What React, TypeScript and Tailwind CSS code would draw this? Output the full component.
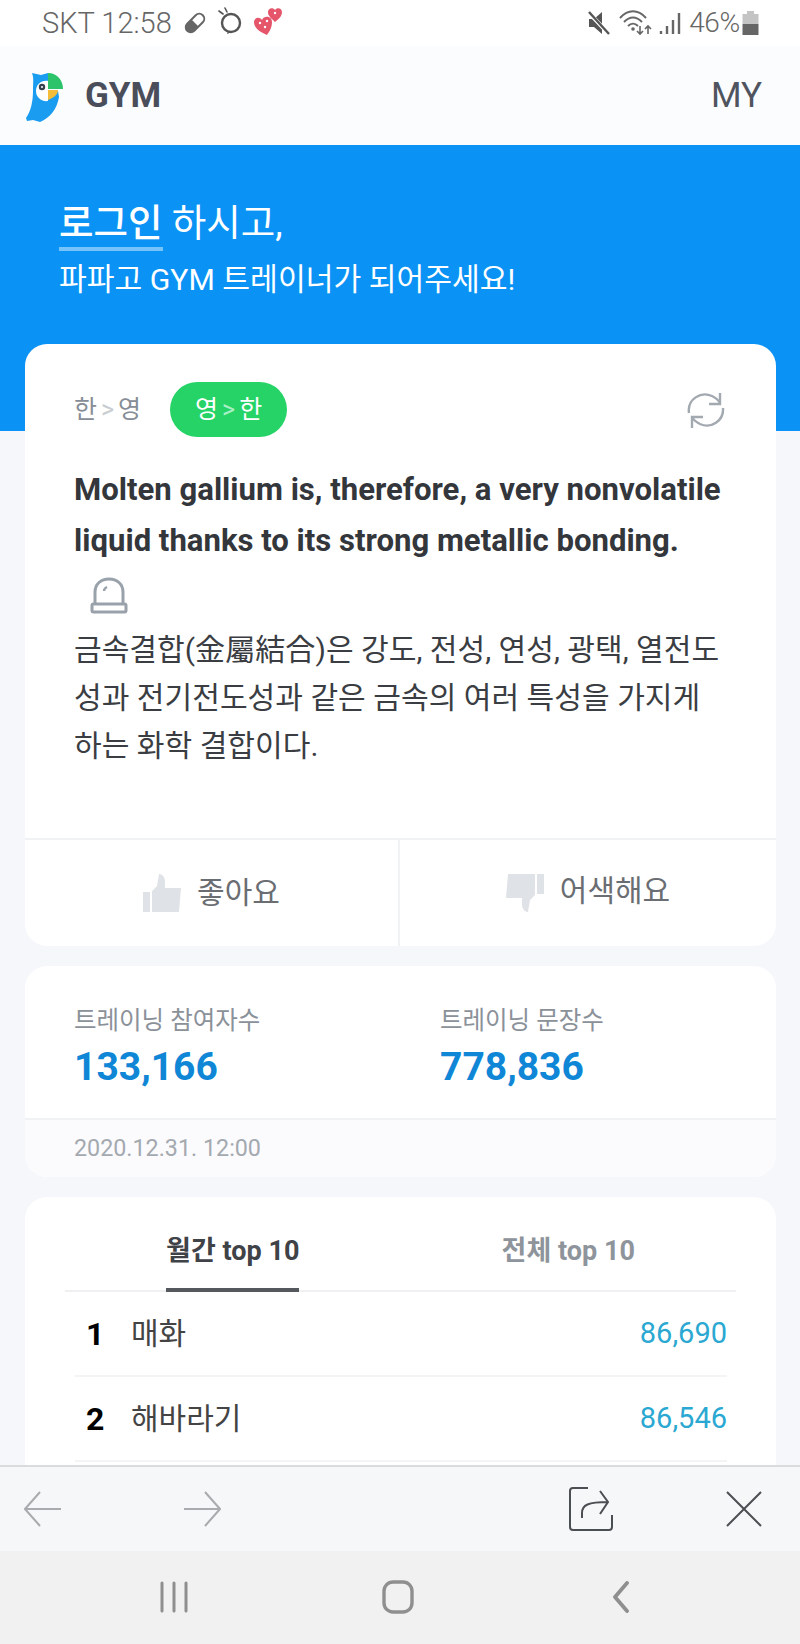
const FONT = "font-['Roboto','Noto_Sans_CJK_KR',sans-serif]";

function Logo() {
  return (
    <svg width="40" height="52" viewBox="0 0 40 52" className="shrink-0">
      <path d="M7 2 L16 4 L23 2 V20 H33 L34 26 C32 38 25 47 15 51 L8 49 L2 50 L1 47 C6 40 8 30 8 20 C8 12 9 7 7 2Z" fill="#1a9cf0" />
      <path d="M23 2 C32 2 38 9 38 18 H23Z" fill="#2cc36b" />
      <path d="M23 19 H33 C33 24 28 27 23 29Z" fill="#f3bd3a" />
      <path d="M23 10 C16 9 11 14 11 20 C11 26 16 31 23 30Z" fill="#ffffff" />
      <circle cx="17" cy="16" r="3.2" fill="#33404d" />
      <circle cx="17" cy="16" r="1" fill="#ffffff" />
    </svg>
  );
}

function StatusLeftIcons() {
  return (
    <div className="flex items-center gap-[10px]">
      <svg width="24" height="24" viewBox="0 0 24 24">
        <g transform="rotate(-45 12 12)">
          <rect x="1" y="7" width="22" height="10" rx="5" fill="none" stroke="#666" strokeWidth="2" />
          <path d="M6 7 H12 V17 H6 A5 5 0 0 1 6 7Z" fill="#666" />
        </g>
      </svg>
      <svg width="26" height="28" viewBox="0 0 26 28" className="-mt-1">
        <circle cx="14" cy="16" r="9" fill="none" stroke="#555" strokeWidth="2.4" />
        <path d="M11 24 L10 27 L15 25" fill="#555" />
        <path d="M2 4 L6 7 M8 1 L10 5" stroke="#555" strokeWidth="1.6" strokeLinecap="round" />
      </svg>
      <svg width="30" height="30" viewBox="0 0 30 30" className="-mt-1">
        <path d="M14 29 C7 26 1 22 1 16 C1 12 6 10 9 14 C11 9 19 10 19 16 C19 22 16 26 14 29Z" fill="#e5566b" />
        <path d="M22 16 C18 12 15 10 15 6 C15 2 20 1 22 4 C24 1 29 2 29 6 C29 10 26 13 22 16Z" fill="#e5566b" />
        <circle cx="7" cy="17" r="1.2" fill="#fff" />
        <circle cx="12" cy="21" r="1.2" fill="#fff" />
        <circle cx="14" cy="15" r="1.2" fill="#fff" />
        <circle cx="22" cy="7" r="1.2" fill="#fff" />
      </svg>
    </div>
  );
}

function StatusRightIcons() {
  return (
    <div className="flex items-center">
      <svg width="24" height="26" viewBox="0 0 24 26" className="mr-[8px]">
        <path d="M2 9 H7 L15 2 V24 L7 17 H2Z" fill="#555" />
        <path d="M1 2 L22 24" stroke="#fff" strokeWidth="4" />
        <path d="M2 2 L22 24" stroke="#555" strokeWidth="2.4" />
      </svg>
      <svg width="34" height="26" viewBox="0 0 34 26" className="mr-[6px]">
        <path d="M1 8 C9 -1 19 -1 27 8 M5 12 C11 6 17 6 23 12 M9 16 C12 13 16 13 19 16" fill="none" stroke="#666" strokeWidth="2" />
        <circle cx="14" cy="19" r="1.8" fill="#666" />
        <path d="M21 16 V24 M18 21 L21 24 L24 21 M29 24 V16 M26 19 L29 16 L32 19" fill="none" stroke="#666" strokeWidth="1.6" />
      </svg>
      <svg width="22" height="24" viewBox="0 0 22 24" className="mr-[8px]">
        <path d="M2 20 V23 M8 15 V23 M14 9 V23 M20 2 V23" stroke="#666" strokeWidth="2.4" />
      </svg>
      <span className="text-[28px] font-light leading-none text-[#666] tracking-[-0.3px]">46%</span>
      <svg width="17" height="24" viewBox="0 0 17 24" className="ml-[2px]">
        <rect x="5" y="0" width="7" height="3" fill="#c4c4c4" />
        <rect x="0.5" y="3" width="16" height="10" fill="#c4c4c4" />
        <rect x="0.5" y="13" width="16" height="11" fill="#666" />
      </svg>
    </div>
  );
}

function RefreshIcon() {
  return (
    <svg width="38" height="38" viewBox="0 0 38 38" fill="none" stroke="#a3a9b1" strokeWidth="2.4">
      <path d="M2 22 C0 8 14 0 25 5 C29 7 32 10 33 12" />
      <path d="M33 2 V13 H22" />
      <path d="M36 17 C37 30 24 38 13 33 C9 31 6 28 5 26" />
      <path d="M5 37 V26 H16" />
    </svg>
  );
}

function AlarmIcon() {
  return (
    <svg width="38" height="38" viewBox="0 0 38 38" fill="none" stroke="#99a1aa" strokeWidth="3">
      <path d="M5 26 V15 C5 7 11 2 19 2 C27 2 33 7 33 15 V26" />
      <rect x="2" y="27" width="34" height="8" rx="1.5" />
      <path d="M14 14 C14 12 15 11 17 10" strokeWidth="2.4" />
    </svg>
  );
}

function ThumbIcon({ down }: { down?: boolean }) {
  return (
    <svg width="38" height="38" viewBox="0 0 38 38" fill="#dfe2e6" className={down ? "rotate-180" : ""}>
      <rect x="0" y="18" width="7" height="20" />
      <path d="M9 17 L14 12 L16 0 C20 0 22 4 22 8 L22 14 L38 14 L36 38 L9 38Z" />
    </svg>
  );
}

function Row({ rank, name, count }: { rank: number; name: string; count: string }) {
  return (
    <div className="flex items-center h-[85px] border-b-2 border-[#f3f4f6] pl-[11px] shrink-0">
      <span className="w-[33px] text-[32px] font-bold text-black">{rank}</span>
      <span className="ml-[12px] text-[30px] text-[#444]">{name}</span>
      <span className="ml-auto text-[29px] text-[#2aa8d2]">{count}</span>
    </div>
  );
}

export default function App() {
  return (
    <div className={`${FONT} w-[800px] h-[1644px] flex flex-col overflow-hidden bg-[#f6f7fb]`}>
      {/* Status bar */}
      <div className="h-[46px] shrink-0 bg-white flex items-center justify-between pl-[42px] pr-[41px]">
        <div className="flex items-center gap-[11px]">
          <span className="text-[29px] leading-none text-[#666] font-light">SKT 12:58</span>
          <StatusLeftIcons />
        </div>
        <StatusRightIcons />
      </div>

      <div className="flex-1 min-h-0 overflow-hidden">
        {/* Header */}
        <div className="h-[99px] pt-[2px] bg-[#fbfcfe] flex items-center justify-between pl-[25px] pr-[38px]">
          <div className="flex items-center gap-[20px]">
            <Logo />
            <span className="text-[35px] font-bold text-[#4a4e5a]">GYM</span>
          </div>
          <span className="text-[35px] text-[#50545e]">MY</span>
        </div>

        {/* Login banner */}
        <div className="h-[286px] bg-[#0a93f5] pt-[55px] pl-[59px] text-white">
          <div className="text-[37.5px] leading-[46px]">
            <span className="inline-block font-medium border-b-[4px] border-[#76c3fb] pb-[1px]">로그인</span>{" "}
            <span>하시고,</span>
          </div>
          <div className="mt-[7px] text-[30.2px] leading-[44px]">파파고 GYM 트레이너가 되어주세요!</div>
        </div>

        <div className="-mt-[87px] pl-[25px] pr-[24px] flex flex-col gap-[20px]">
          {/* Training card */}
          <div className="bg-white rounded-[22px] h-[602px] flex flex-col overflow-hidden">
            <div className="flex-1 min-h-0 pt-[38px] px-[49px]">
              <div className="flex items-center h-[55px]">
                <span className="text-[25px] text-[#868d96]">
                  한<span className="text-[#c9cdd2] mx-[4px]">&gt;</span>영
                </span>
                <span className="ml-[29px] w-[117px] h-[55px] rounded-full bg-[#25d366] flex items-center justify-center text-[25px] text-white">
                  영<span className="text-[#a8efc4] mx-[4px]">&gt;</span>한
                </span>
                <div className="ml-auto mr-[2px]">
                  <RefreshIcon />
                </div>
              </div>
              <div className="mt-[27px] text-[31.1px] leading-[51px] font-bold text-[#33363b] whitespace-nowrap">
                Molten gallium is, therefore, a very nonvolatile
                <br />
                liquid thanks to its strong metallic bonding.
              </div>
              <div className="mt-[11px] ml-[16px] h-[38px]">
                <AlarmIcon />
              </div>
              <div className="mt-[11px] text-[30.1px] leading-[48px] text-[#3a3d42] whitespace-nowrap">
                금속결합(金屬結合)은 강도, 전성, 연성, 광택, 열전도
                <br />
                성과 전기전도성과 같은 금속의 여러 특성을 가지게
                <br />
                하는 화학 결합이다.
              </div>
            </div>
            <div className="h-[108px] shrink-0 flex border-t-2 border-[#f1f2f4]">
              <div className="w-[375px] flex items-center justify-center gap-[16px] border-r-2 border-[#f1f2f4] text-[30px] text-[#6a6d72]">
                <ThumbIcon />
                <span className="-mt-[2px]">좋아요</span>
              </div>
              <div className="flex-1 flex items-center justify-center gap-[16px] text-[30px] text-[#6a6d72]">
                <ThumbIcon down />
                <span className="-mt-[6px]">어색해요</span>
              </div>
            </div>
          </div>

          {/* Stats card */}
          <div className="bg-white rounded-[22px] h-[211px] flex flex-col overflow-hidden">
            <div className="h-[154px] shrink-0 flex pt-[38px] pl-[49px] border-b-2 border-[#f1f2f4]">
              <div className="w-[366px]">
                <div className="text-[24.5px] leading-[34px] text-[#8b9199]">트레이닝 참여자수</div>
                <div className="mt-[4px] text-[39px] leading-[50px] font-bold text-[#0f87d6]">133,166</div>
              </div>
              <div>
                <div className="text-[24.5px] leading-[34px] text-[#8b9199]">트레이닝 문장수</div>
                <div className="mt-[4px] text-[39px] leading-[50px] font-bold text-[#0f87d6]">778,836</div>
              </div>
            </div>
            <div className="flex-1 bg-[#fbfbfd] flex items-center pl-[49px] text-[23.3px] text-[#a4a9b0]">
              2020.12.31. 12:00
            </div>
          </div>

          {/* Top 10 card */}
          <div className="bg-white rounded-t-[22px] h-[400px] px-[40px] flex flex-col">
            <div className="h-[95px] shrink-0 grid grid-cols-2 border-b-2 border-[#eff0f2]">
              <div className="flex justify-center">
                <span className="h-[95px] pt-[18px] flex items-center text-[27px] font-bold text-[#3f4247] border-b-[4px] border-[#55585d]">
                  월간 top 10
                </span>
              </div>
              <div className="flex justify-center">
                <span className="h-[93px] pt-[16px] flex items-center text-[27px] font-bold text-[#8e949b]">
                  전체 top 10
                </span>
              </div>
            </div>
            <div className="pl-[10px] pr-[9px] flex flex-col">
              <Row rank={1} name="매화" count="86,690" />
              <Row rank={2} name="해바라기" count="86,546" />
            </div>
          </div>
        </div>
      </div>

      {/* Browser toolbar */}
      <div className="h-[86px] shrink-0 bg-[#f6f7f9] border-t-2 border-[#d9dbdd] flex items-center pl-[24px] pr-[37px]">
        <svg width="38" height="36" viewBox="0 0 38 36" fill="none" stroke="#a9abae" strokeWidth="2">
          <path d="M37 18 H1 M16 1 L1 18 L16 35" />
        </svg>
        <svg width="38" height="36" viewBox="0 0 38 36" fill="none" stroke="#a9abae" strokeWidth="2" className="ml-[121px]">
          <path d="M1 18 H37 M22 1 L37 18 L22 35" />
        </svg>
        <svg width="46" height="46" viewBox="0 0 46 46" fill="none" stroke="#4b4e52" strokeWidth="2" className="ml-auto">
          <path d="M20 2 H5 C3 2 2 3 2 5 V41 C2 43 3 44 5 44 H41 C43 44 44 43 44 41 V29" />
          <path d="M14 32 V27 C14 19 20 16 40 16 M32 5 L40 16 L32 28" />
        </svg>
        <svg width="38" height="38" viewBox="0 0 38 38" fill="none" stroke="#4b4e52" strokeWidth="2" className="ml-[111px]">
          <path d="M2 2 L36 36 M36 2 L2 36" />
        </svg>
      </div>

      {/* Android nav */}
      <div className="h-[93px] shrink-0 bg-[#f1f1f1] flex items-center pb-[2px]">
        <svg width="28" height="32" viewBox="0 0 28 32" fill="none" stroke="#8f8f8f" strokeWidth="3" strokeLinecap="round" className="ml-[160px]">
          <path d="M2 2 V30 M14 2 V30 M26 2 V30" />
        </svg>
        <svg width="32" height="34" viewBox="0 0 32 34" fill="none" stroke="#8f8f8f" strokeWidth="3.4" className="ml-[194px]">
          <rect x="2" y="2" width="28" height="30" rx="9" />
        </svg>
        <svg width="20" height="32" viewBox="0 0 20 32" fill="none" stroke="#8f8f8f" strokeWidth="3.8" strokeLinecap="round" strokeLinejoin="round" className="ml-[197px]">
          <path d="M16 2 L4 16 L16 30" />
        </svg>
      </div>
    </div>
  );
}
